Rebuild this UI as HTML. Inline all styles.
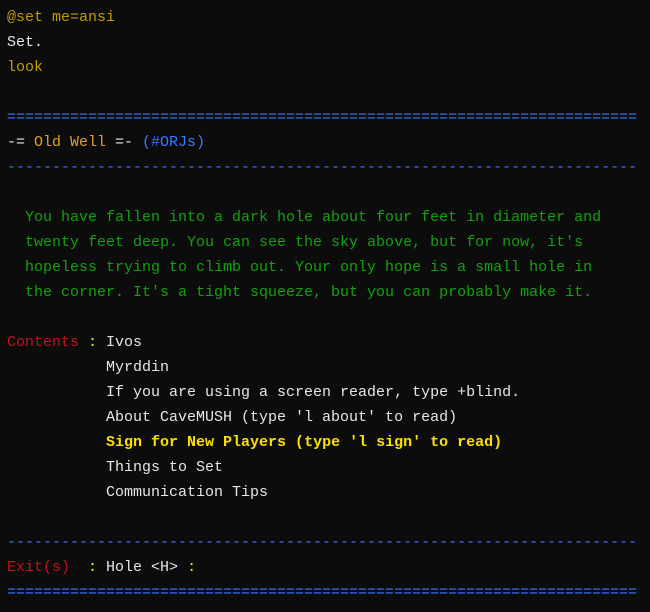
<!DOCTYPE html>
<html><head><meta charset="utf-8"><style>
html,body{margin:0;padding:0;background:#0c0c0c;width:650px;height:612px;overflow:hidden}
pre{margin:0;padding:5px 0 0 7px;font-family:"Liberation Mono",monospace;font-size:15px;line-height:25px;color:#e6e6e6;white-space:pre}
.g{color:#c19c00}.gr{color:#13a10e}.b{color:#3b78ff}.r{color:#c50f1f}.y{color:#f9f100}.Y{color:#f9e100;font-weight:bold}.o{color:#e0a030}
</style></head><body><pre><span class="g">@set me=ansi</span>
Set.
<span class="g">look</span>

<span class="b">======================================================================</span>
-= <span class="o">Old Well</span> =- <span class="b">(#ORJs)</span>
<span class="b">----------------------------------------------------------------------</span>

<span class="gr">  You have fallen into a dark hole about four feet in diameter and
  twenty feet deep. You can see the sky above, but for now, it's
  hopeless trying to climb out. Your only hope is a small hole in
  the corner. It's a tight squeeze, but you can probably make it.</span>

<span class="r">Contents</span> <span class="y">:</span> Ivos
           Myrddin
           If you are using a screen reader, type +blind.
           About CaveMUSH (type 'l about' to read)
           <span class="Y">Sign for New Players (type 'l sign' to read)</span>
           Things to Set
           Communication Tips

<span class="b">----------------------------------------------------------------------</span>
<span class="r">Exit(s)</span>  <span class="y">:</span> Hole &lt;H&gt; <span class="y">:</span>
<span class="b">======================================================================</span></pre></body></html>
